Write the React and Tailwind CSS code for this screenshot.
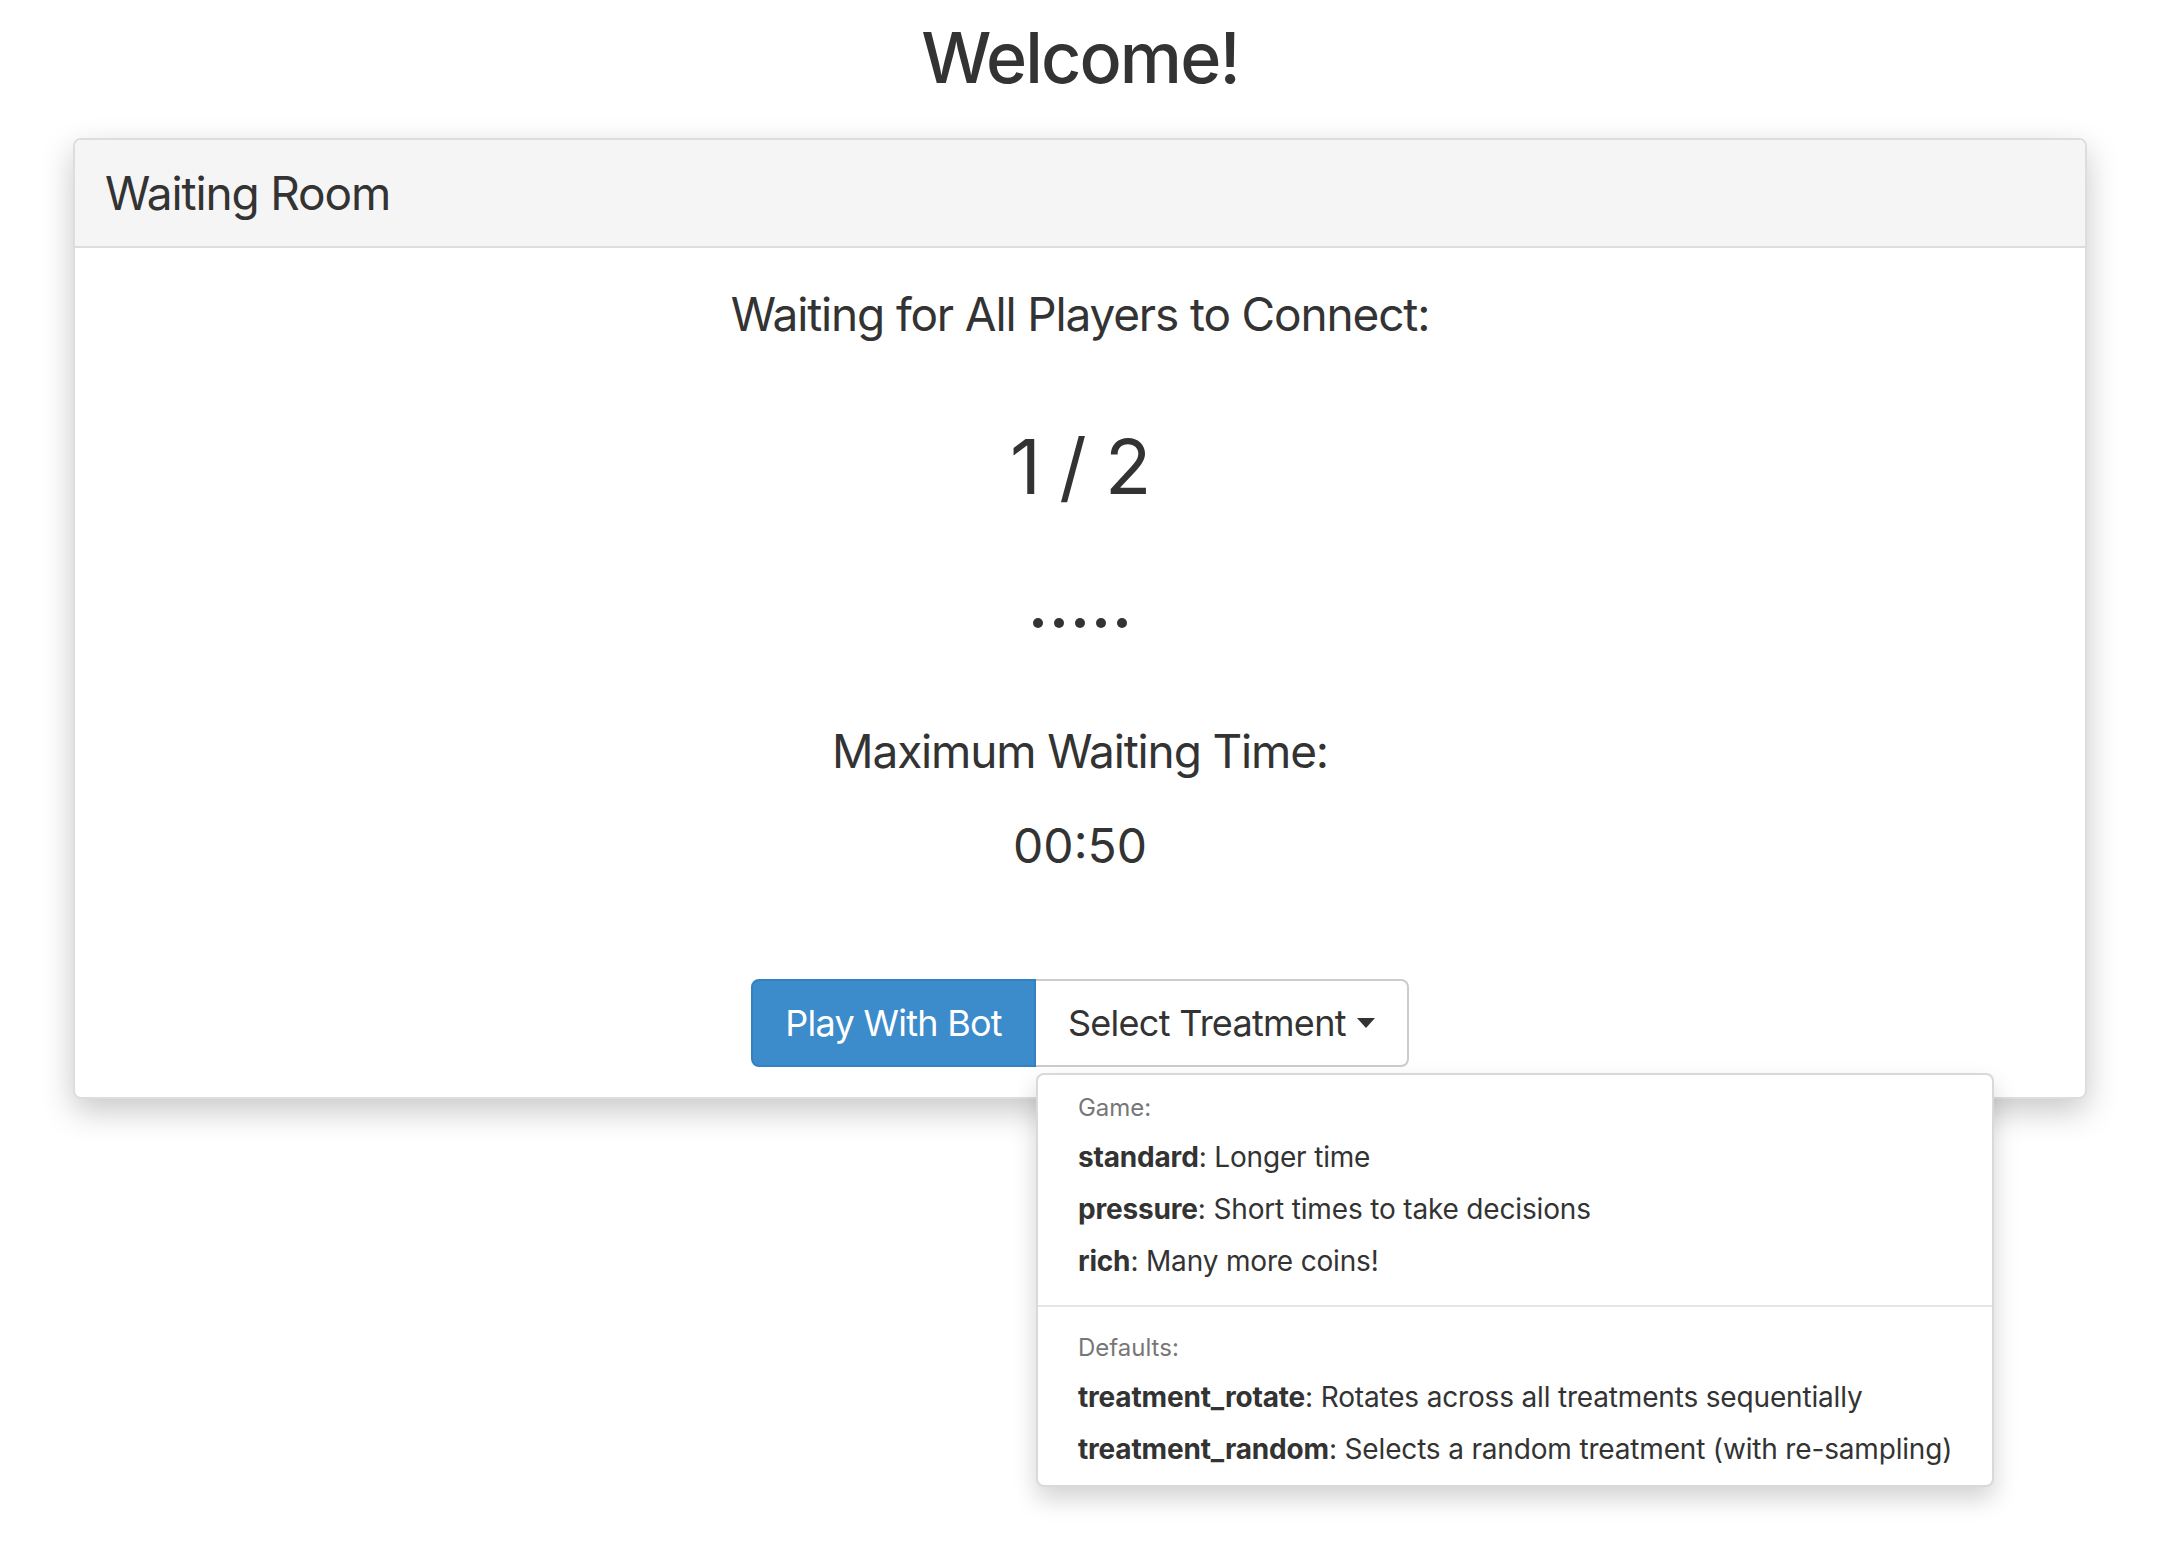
import React from "react";

const gameTreatments = [
  { name: "standard", desc: "Longer time" },
  { name: "pressure", desc: "Short times to take decisions" },
  { name: "rich", desc: "Many more coins!" },
];

const defaultTreatments = [
  { name: "treatment_rotate", desc: "Rotates across all treatments sequentially" },
  { name: "treatment_random", desc: "Selects a random treatment (with re-sampling)" },
];

function MenuHeader({ children }) {
  return (
    <div className="px-[40px] py-[6px] text-[24px] leading-[34px] text-[#777]">
      {children}
    </div>
  );
}

function MenuItem({ name, desc }) {
  return (
    <div className="whitespace-nowrap px-[40px] py-[6px] text-[28px] leading-[40px] tracking-[-0.006em] text-[#333]">
      <span className="font-bold">{name}</span>: {desc}
    </div>
  );
}

export default function App() {
  return (
    <div className="min-h-screen bg-white font-['Inter',sans-serif] text-[#333]">
      <h1 className="pt-[18px] text-center text-[70px] font-medium leading-[79px] tracking-[-0.027em]">
        Welcome!
      </h1>

      {/* Waiting Room panel */}
      <div className="mx-[73px] mt-[41px] rounded-lg border-2 border-[#ddd] bg-white shadow-[0_12px_32px_rgba(0,0,0,0.22)]">
        <div className="flex h-[108px] items-center rounded-t-[6px] border-b-2 border-[#ddd] bg-[#f5f5f5] px-[30px]">
          <h3 className="text-[46px] leading-[52.8px] tracking-[-0.025em]">Waiting Room</h3>
        </div>

        <div className="flex flex-col items-center pb-[30px] pt-[40px] text-center">
          <h3 className="text-[46px] leading-[52.8px] tracking-[-0.025em]">
            Waiting for All Players to Connect:
          </h3>
          <div className="mt-[81px] text-[76px] leading-[88px] tracking-[-0.02em]">1 / 2</div>
          <div className="mt-[108px] flex gap-[11px]">
            {[0, 1, 2, 3, 4].map((i) => (
              <span key={i} className="h-[10px] w-[10px] rounded-full bg-[#333]" />
            ))}
          </div>
          <h3 className="mt-[97px] text-[46px] leading-[52.8px] tracking-[-0.025em]">
            Maximum Waiting Time:
          </h3>
          <div className="mt-[42px] text-[48px] leading-[52.8px]">00:50</div>

          {/* Button group */}
          <div className="mt-[107px] flex">
            <button className="h-[88px] rounded-l-lg border-2 border-[#3580c0] bg-[#3c8bcb] px-[32px] text-[36px] leading-[48px] tracking-[-0.02em] text-white">
              Play With Bot
            </button>
            <div className="relative">
              <button className="flex h-[88px] items-center gap-[11px] rounded-r-lg border-2 border-l-0 border-[#ccc] bg-white px-[32px] text-[36px] leading-[48px] tracking-[-0.02em] text-[#333]">
                Select Treatment
                <span className="h-0 w-0 border-x-[9px] border-t-[10px] border-x-transparent border-t-[#333]" />
              </button>

              {/* Dropdown menu */}
              <div className="absolute left-0 top-[calc(100%+6px)] z-10 rounded-lg border-2 border-[rgba(0,0,0,0.15)] bg-white py-[10px] text-left shadow-[0_12px_24px_rgba(0,0,0,0.175)]">
                <MenuHeader>Game:</MenuHeader>
                {gameTreatments.map((t) => (
                  <MenuItem key={t.name} {...t} />
                ))}
                <div className="my-[18px] h-[2px] bg-[#e5e5e5]" />
                <MenuHeader>Defaults:</MenuHeader>
                {defaultTreatments.map((t) => (
                  <MenuItem key={t.name} {...t} />
                ))}
              </div>
            </div>
          </div>
        </div>
      </div>
    </div>
  );
}
